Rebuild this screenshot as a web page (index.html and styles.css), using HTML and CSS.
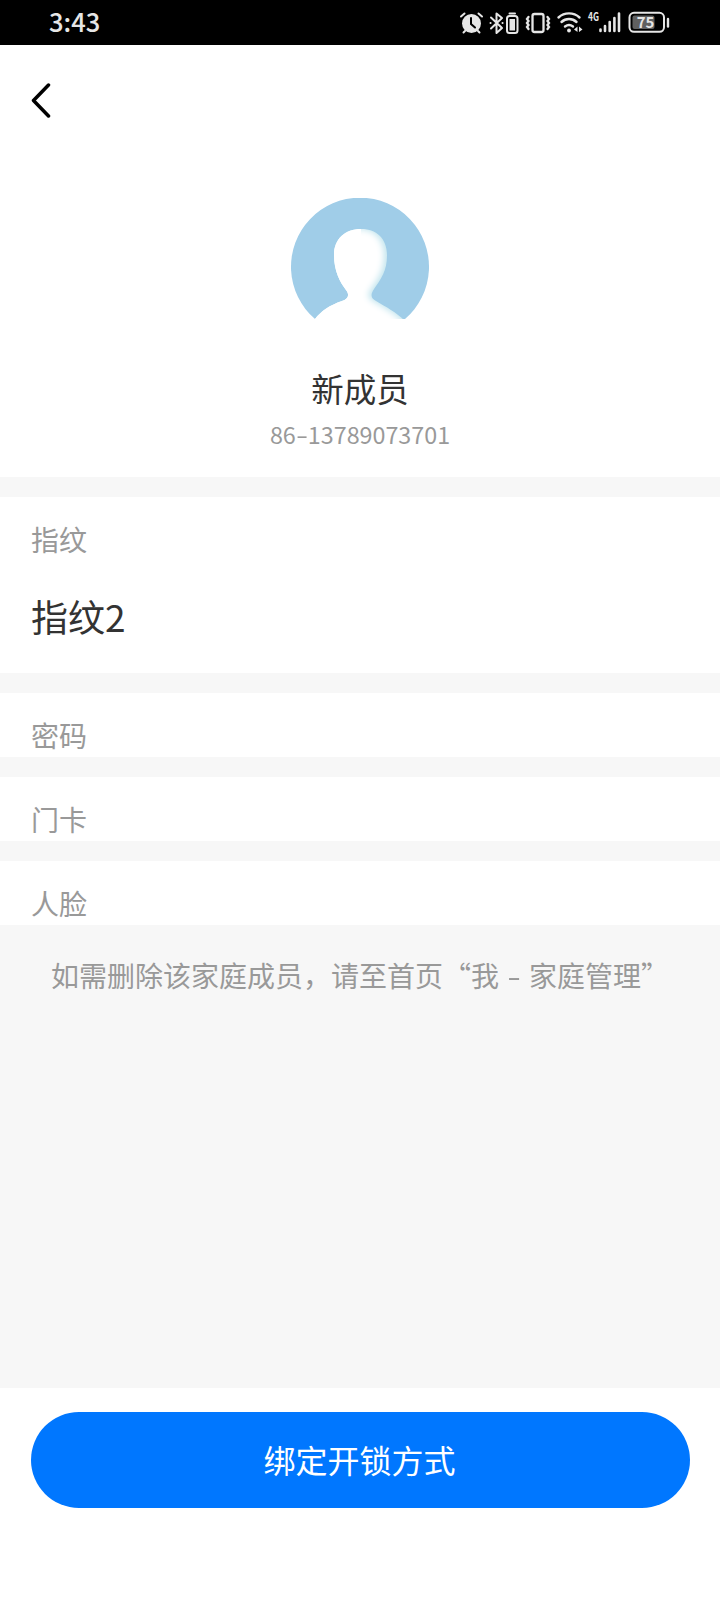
FILE: index.html
```html
<!DOCTYPE html>
<html lang="zh-CN">
	<head>
		<meta charset="UTF-8">
		<title>新成员</title>
		<link rel="stylesheet" href="styles.css">
	</head>
	<body>
		<div class="page">
			<div class="status">
				<span class="time">3:43</span>
				<svg class="status-icons" width="220" height="45" viewBox="455 0 220 45" fill="none" stroke="#e6e6e6" stroke-linecap="round">
					<!-- 闹钟 -->
					<circle cx="471.500" cy="23.500" r="9.500" fill="#e6e6e6" stroke="none"/>
					<path d="M461 16.500l3.500-3M482 16.500l-3.500-3M465 31l-1.500 1.500M478 31l1.500 1.500" stroke-width="2"/>
					<path d="M471 18v6l4 3.500" stroke="#000" stroke-width="2"/>
					<!-- 蓝牙 -->
					<path d="M491 17.500L502 28l-5.500 5V13.500L502 18l-11 10.500" stroke-width="2" stroke-linejoin="round"/>
					<path d="M490.500 23h.1M502.500 23h.1" stroke-width="2"/>
					<rect x="507" y="16" width="10.500" height="17" rx="2.500" stroke-width="2"/>
					<path d="M509.500 13.500h5.500" stroke-width="2"/>
					<rect x="509.500" y="19" width="5.500" height="11.500" fill="#e6e6e6" stroke="none"/>
					<!-- 振动 -->
					<rect x="532.500" y="14" width="11" height="18" rx="2" stroke-width="2.300"/>
					<path d="M528.500 17l-1.500 2 1.500 2-1.500 2 1.500 2-1.500 2 1.500 2M547.500 17l1.500 2-1.500 2 1.500 2-1.500 2 1.500 2-1.500 2" stroke-width="2.300"/>
					<!-- WiFi -->
					<path d="M558.500 17.500a15.500 15.500 0 0 1 21 0M561.500 22a11 11 0 0 1 15 0M565 26.500a6.500 6.500 0 0 1 8 0" stroke-width="2.400"/>
					<circle cx="569" cy="30.500" r="1.900" fill="#e6e6e6" stroke="none"/>
					<path d="M577.500 26.500v5.500l-3.500-2.500zM579 26.500v5.500l3.500-2.500z" fill="#e6e6e6" stroke="none"/>
					<text class="net" x="588" y="21" textLength="11" lengthAdjust="spacingAndGlyphs">4G</text>
					<path d="M600.500 29.500v1.500M605 26v5M609.700 22v9M614.400 18v13M619 13.500v17.500" stroke-width="2.600"/>
					<!-- 电量 -->
					<rect x="629.500" y="12.800" width="34.500" height="19" rx="4.500" stroke-width="2"/>
					<rect x="632.500" y="15.500" width="22" height="13.500" rx="2" fill="#606060" stroke="none"/>
					<path d="M668 19v7.500" stroke-width="2.400"/>
					<text class="battery" x="645.500" y="27.500">75</text>
				</svg>
			</div>
			<div class="nav">
				<svg width="20" height="35" viewBox="0 0 20 35" fill="none" stroke="#000" stroke-width="3.500" stroke-linecap="round" stroke-linejoin="round">
					<path d="M17.500 2L2.500 17.500 17.500 33"/>
				</svg>
			</div>
			<div class="member">
				<svg class="avatar" width="138" height="138" viewBox="0 0 138 138">
					<defs>
						<path id="person" d="M70 31C54 31 43 41 43 57C43 73 49 84 55 92C59 97 57 101 51 103C39 107 30 113 24 121L20 138H120L114 123C105 114 95 109 85 103C80 100 79 97 83 91C90 81 96 73 96 57C96 41 86 31 70 31Z"/>
						<clipPath id="personClip"><use href="#person"/></clipPath>
						<filter id="soft" x="-20%" y="-20%" width="140%" height="140%"><feGaussianBlur stdDeviation="3"/></filter>
					</defs>
					<path d="M24 121A69 69 0 1 1 114 121Z" fill="#a0cde8"/>
					<use href="#person" fill="#c3e5ee"/>
					<g clip-path="url(#personClip)">
						<path d="M10 10H70V138H10Z" fill="#fff"/>
						<use href="#person" x="-3" y="0" fill="#fff" filter="url(#soft)"/>
					</g>
					<path d="M0 121H138V138H0Z" fill="#fff"/>
				</svg>
				<div class="name">新成员</div>
				<div class="phone">86<span class="dash">-</span>13789073701</div>
			</div>
			<div class="group group-finger">
				<div class="label">指纹</div>
				<div class="item">指纹2</div>
			</div>
			<div class="group">
				<div class="label">密码</div>
			</div>
			<div class="group">
				<div class="label">门卡</div>
			</div>
			<div class="group">
				<div class="label">人脸</div>
			</div>
			<div class="tip">如需删除该家庭成员，请至首页“我<span class="tip-dash">-</span>家庭管理”</div>
			<div class="footer">
				<button class="btn">绑定开锁方式</button>
			</div>
		</div>
	</body>
</html>
```

FILE: styles.css
```css
body{
	margin:0;
	font-family:"Noto Sans CJK SC",sans-serif;
	background:#f7f7f7;
}
.page{
	width:720px;
	height:1600px;
	display:flex;
	flex-direction:column;
	overflow:hidden;
}
.status{
	height:45px;
	background:#000;
	display:flex;
	justify-content:space-between;
	align-items:center;
	padding:0 45px 0 49px;
}
.time{
	color:#e6e6e6;
	font-size:25.500px;
	font-weight:500;
	line-height:42px;
	padding-bottom:3px;
}
.status-icons{
	display:block;
}
.status-icons text{
	fill:#e6e6e6;
	stroke:none;
	font-family:"Noto Sans CJK SC",sans-serif;
}
.status-icons .net{
	font-size:12px;
	font-weight:700;
}
.status-icons .battery{
	font-size:15px;
	font-weight:700;
	text-anchor:middle;
}
.nav{
	height:113px;
	box-sizing:border-box;
	padding:38px 31px 0;
	background:#fff;
}
.nav svg{
	display:block;
}
.member{
	height:319px;
	box-sizing:border-box;
	padding-top:40px;
	background:#fff;
	display:flex;
	flex-direction:column;
	align-items:center;
}
.avatar{
	display:block;
}
.name{
	margin-top:28px;
	font-size:32.500px;
	line-height:48px;
	color:#333;
}
.phone{
	margin-top:4px;
	font-size:23.300px;
	line-height:36px;
	color:#999;
}
.dash{
	display:inline-block;
	transform:scaleX(1.5);
	padding:0 2px;
}
.group{
	height:64px;
	box-sizing:border-box;
	margin-top:20px;
	padding:22px 31px 0;
	background:#fff;
}
.group-finger{
	height:176px;
}
.label{
	font-size:28px;
	line-height:40px;
	color:#999;
}
.item{
	margin-top:30px;
	font-size:37px;
	line-height:54px;
	color:#333;
}
.tip{
	flex:1;
	padding:30px 0 0 51px;
	font-size:28px;
	line-height:40px;
	color:#999;
	white-space:nowrap;
}
.tip-dash{
	display:inline-block;
	width:30px;
	text-align:center;
	transform:scaleX(1.4);
}
.footer{
	height:212px;
	box-sizing:border-box;
	padding:24px 30px 0 31px;
	background:#fff;
}
.btn{
	display:block;
	width:100%;
	height:96px;
	padding:0 2px 2px 0;
	border:none;
	border-radius:48px;
	background:#0077ff;
	color:#fff;
	font-family:inherit;
	font-size:32px;
	line-height:94px;
}
```
